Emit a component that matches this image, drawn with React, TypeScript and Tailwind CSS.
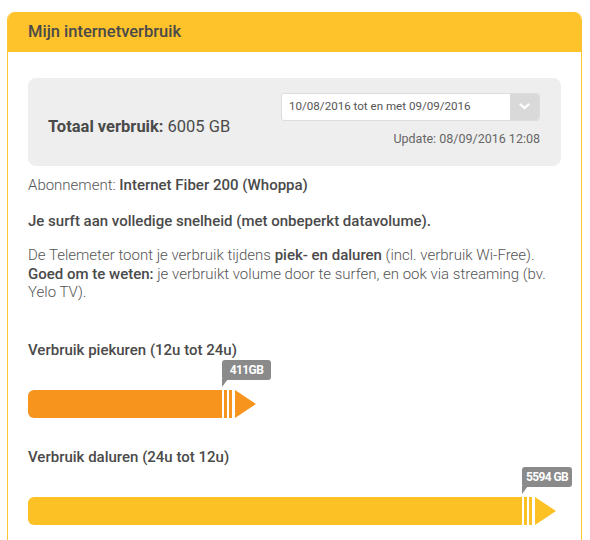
import React from 'react'

const font = { fontFamily: 'Roboto, "Liberation Sans", sans-serif' }

function BarEnd({ color }: { color: string }) {
  return (
    <svg width="35" height="28" viewBox="0 0 35 28" className="block shrink-0">
      <rect x="2" y="0" width="3" height="28" fill={color} />
      <rect x="7" y="0" width="3" height="28" fill={color} />
      <polygon points="13,0 34,14 13,28" fill={color} />
    </svg>
  )
}

function Badge({ label, width }: { label: string; width: string }) {
  return (
    <div className={`absolute left-0 bottom-[38px] h-[20px] ${width} rounded-[3px] bg-[#8a8a8a] flex items-center justify-center`}>
      <span className="text-[12px] font-bold text-white tracking-[-0.6px]">{label}</span>
      <svg width="6" height="8" viewBox="0 0 6 8" className="absolute left-0 top-[19px]">
        <polygon points="0,0 6,0 0,8" fill="#8a8a8a" />
      </svg>
    </div>
  )
}

function UsageBar({ title, value, barWidth, color, badgeWidth }: {
  title: string
  value: string
  barWidth: string
  color: string
  badgeWidth: string
}) {
  return (
    <div>
      <p className="text-[15px] font-medium text-[#4a4a4a] leading-5">{title}</p>
      <div className="flex items-center mt-[30px]">
        <div className={`h-[28px] ${barWidth} rounded-l-[6px]`} style={{ backgroundColor: color }} />
        <div className="relative">
          <BarEnd color={color} />
          <Badge label={value} width={badgeWidth} />
        </div>
      </div>
    </div>
  )
}

export default function App() {
  return (
    <div className="min-h-screen bg-white pt-[12px] pl-[7px]" style={font}>
      <div className="w-[575px] rounded-t-[8px] border-x border-[#fcc42e] bg-white overflow-hidden">
        {/* Header */}
        <div className="h-[40px] bg-[#fec22a] flex items-center px-[20px]">
          <h2 className="text-[16.5px] font-medium text-[#4a4a4a]">Mijn internetverbruik</h2>
        </div>

        {/* Body */}
        <div className="px-[20px] pt-[26px] pb-[40px]">
          {/* Total box */}
          <div className="h-[88px] rounded-[8px] bg-[#eeeeee] flex items-center justify-between pl-[20px] pr-[21px]">
            <p className="text-[16.5px] text-[#4a4a4a] mt-[10px]">
              <span className="font-bold">Totaal verbruik:</span> 6005 GB
            </p>
            <div className="flex flex-col items-end gap-[9px] -mt-[3px]">
              <div className="w-[259px] h-[28px] rounded-[3px] border border-[#dddddd] bg-white flex items-center overflow-hidden">
                <span className="flex-1 pl-[7px] text-[11.6px] text-[#555555]">10/08/2016 tot en met 09/09/2016</span>
                <div className="w-[29px] h-full bg-[#d9d9d9] flex items-center justify-center">
                  <svg width="11" height="7" viewBox="0 0 11 7">
                    <path d="M1.5 1.5 L5.5 5 L9.5 1.5" fill="none" stroke="white" strokeWidth="2.2" strokeLinecap="round" />
                  </svg>
                </div>
              </div>
              <p className="text-[12.5px] text-[#666666]">Update: 08/09/2016 12:08</p>
            </div>
          </div>

          {/* Text */}
          <div className="mt-[10px] text-[15px] text-[#555555] leading-[18.5px] font-light">
            <p>Abonnement: <span className="font-medium text-[#4a4a4a]">Internet Fiber 200 (Whoppa)</span></p>
            <p className="mt-[17px] font-medium text-[#4a4a4a]">Je surft aan volledige snelheid (met onbeperkt datavolume).</p>
            <p className="mt-[16px] pr-[8px]">
              De Telemeter toont je verbruik tijdens <span className="font-medium text-[#4a4a4a]">piek- en daluren</span> (incl. verbruik Wi-Free).{' '}
              <span className="font-medium text-[#4a4a4a]">Goed om te weten:</span> je verbruikt volume door te surfen, en ook via streaming (bv. Yelo TV).
            </p>
          </div>

          {/* Bars */}
          <div className="mt-[38px] flex flex-col gap-[29px]">
            <UsageBar title="Verbruik piekuren (12u tot 24u)" value="411GB" barWidth="w-[194px]" color="#f7941e" badgeWidth="w-[49px]" />
            <UsageBar title="Verbruik daluren (24u tot 12u)" value="5594 GB" barWidth="w-[494px]" color="#fcc124" badgeWidth="w-[50px]" />
          </div>
        </div>
      </div>
    </div>
  )
}
